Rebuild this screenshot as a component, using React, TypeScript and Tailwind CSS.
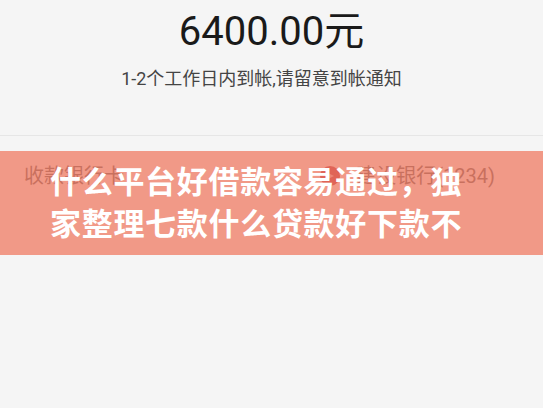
export default function App() {
  return (
    <div
      className="h-[408px] w-full overflow-hidden bg-[#f5f5f5]"
      style={{ fontFamily: 'Roboto, "Noto Sans CJK SC", sans-serif' }}
    >
      {/* amount */}
      <div className="flex h-[136px] flex-col items-center border-b border-[#e6e6e6]">
        <p className="mt-[4px] text-[40px] leading-[56px] text-[#1a1a1a]">6400.00元</p>
        <p className="mt-[6px] pr-[20px] text-[18px] leading-[26px] text-[#444]">
          1-2个工作日内到帐,请留意到帐通知
        </p>
      </div>

      {/* bank row with the title banner stacked over it */}
      <div className="grid">
        <div className="col-start-1 row-start-1 flex h-[84px] items-start pl-[24px] pr-[48px] pt-[26px] text-[20px] leading-[28px] text-[#555]">
          <span>收款银行卡</span>
          <span className="ml-auto flex items-center gap-[16px]">
            <svg width="20" height="20" viewBox="0 0 20 20">
              <circle cx="10" cy="10" r="10" fill="#b3243a" />
              <path d="M6 6 L14 10 L6 14 Z" fill="#ffffff" opacity="0.6" />
            </svg>
            <span>建设银行(1234)</span>
          </span>
        </div>
        <div className="col-start-1 row-start-1 mt-[15px] flex h-[104px] flex-col bg-[#ef7961]/75 px-[50px] pt-[11px] text-[31px] font-bold leading-[42px] tracking-[0.7px] text-white">
          <span className="whitespace-nowrap">什么平台好借款容易通过，独</span>
          <span className="whitespace-nowrap">家整理七款什么贷款好下款不</span>
        </div>
      </div>
    </div>
  );
}
